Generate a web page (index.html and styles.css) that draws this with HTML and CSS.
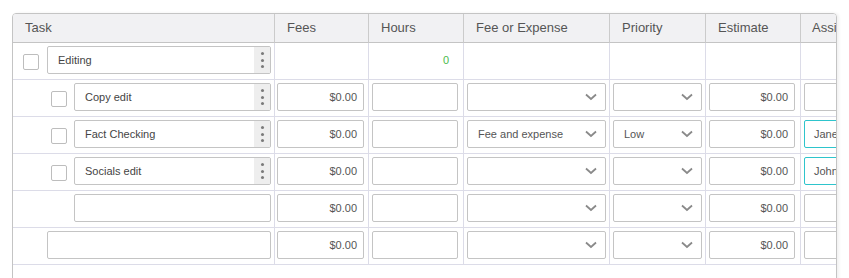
FILE: index.html
```html
<!DOCTYPE html>
<html>
<head>
<meta charset="utf-8">
<link rel="stylesheet" href="styles.css">
</head>
<body>
<div class="page">
  <div class="frame">
    <div class="grid">
      <div class="th">Task</div>
      <div class="th">Fees</div>
      <div class="th">Hours</div>
      <div class="th">Fee or Expense</div>
      <div class="th">Priority</div>
      <div class="th">Estimate</div>
      <div class="th th-last">Assignee</div>

      <!-- Row: Editing -->
      <div class="td task">
        <span class="check"></span>
        <div class="field taskfield"><span class="label">Editing</span><span class="kebab"><i></i><i></i><i></i></span></div>
      </div>
      <div class="td"></div>
      <div class="td total"><span>0</span></div>
      <div class="td"></div>
      <div class="td"></div>
      <div class="td"></div>
      <div class="td"></div>

      <!-- Row: Copy edit -->
      <div class="td task sub">
        <span class="check"></span>
        <div class="field taskfield"><span class="label">Copy edit</span><span class="kebab"><i></i><i></i><i></i></span></div>
      </div>
      <div class="td fees"><div class="field num">$0.00</div></div>
      <div class="td hours"><div class="field"></div></div>
      <div class="td feeexp"><div class="field select"><span class="val"></span><svg class="chev" width="12" height="8" viewBox="0 0 12 8"><polyline points="1,1.5 6,6 11,1.5" fill="none" stroke="#8a8a8a" stroke-width="1.8"/></svg></div></div>
      <div class="td prio"><div class="field select"><span class="val"></span><svg class="chev" width="12" height="8" viewBox="0 0 12 8"><polyline points="1,1.5 6,6 11,1.5" fill="none" stroke="#8a8a8a" stroke-width="1.8"/></svg></div></div>
      <div class="td est"><div class="field num">$0.00</div></div>
      <div class="td assi"><div class="field"></div></div>

      <!-- Row: Fact Checking -->
      <div class="td task sub">
        <span class="check"></span>
        <div class="field taskfield"><span class="label">Fact Checking</span><span class="kebab"><i></i><i></i><i></i></span></div>
      </div>
      <div class="td fees"><div class="field num">$0.00</div></div>
      <div class="td hours"><div class="field"></div></div>
      <div class="td feeexp"><div class="field select"><span class="val">Fee and expense</span><svg class="chev" width="12" height="8" viewBox="0 0 12 8"><polyline points="1,1.5 6,6 11,1.5" fill="none" stroke="#8a8a8a" stroke-width="1.8"/></svg></div></div>
      <div class="td prio"><div class="field select"><span class="val">Low</span><svg class="chev" width="12" height="8" viewBox="0 0 12 8"><polyline points="1,1.5 6,6 11,1.5" fill="none" stroke="#8a8a8a" stroke-width="1.8"/></svg></div></div>
      <div class="td est"><div class="field num">$0.00</div></div>
      <div class="td assi"><div class="field person">Jane Doe</div></div>

      <!-- Row: Socials edit -->
      <div class="td task sub">
        <span class="check"></span>
        <div class="field taskfield"><span class="label">Socials edit</span><span class="kebab"><i></i><i></i><i></i></span></div>
      </div>
      <div class="td fees"><div class="field num">$0.00</div></div>
      <div class="td hours"><div class="field"></div></div>
      <div class="td feeexp"><div class="field select"><span class="val"></span><svg class="chev" width="12" height="8" viewBox="0 0 12 8"><polyline points="1,1.5 6,6 11,1.5" fill="none" stroke="#8a8a8a" stroke-width="1.8"/></svg></div></div>
      <div class="td prio"><div class="field select"><span class="val"></span><svg class="chev" width="12" height="8" viewBox="0 0 12 8"><polyline points="1,1.5 6,6 11,1.5" fill="none" stroke="#8a8a8a" stroke-width="1.8"/></svg></div></div>
      <div class="td est"><div class="field num">$0.00</div></div>
      <div class="td assi"><div class="field person">John Smith</div></div>

      <!-- Row: new subtask -->
      <div class="td task sub">
        <span class="check hidden"></span>
        <div class="field"></div>
      </div>
      <div class="td fees"><div class="field num">$0.00</div></div>
      <div class="td hours"><div class="field"></div></div>
      <div class="td feeexp"><div class="field select"><span class="val"></span><svg class="chev" width="12" height="8" viewBox="0 0 12 8"><polyline points="1,1.5 6,6 11,1.5" fill="none" stroke="#8a8a8a" stroke-width="1.8"/></svg></div></div>
      <div class="td prio"><div class="field select"><span class="val"></span><svg class="chev" width="12" height="8" viewBox="0 0 12 8"><polyline points="1,1.5 6,6 11,1.5" fill="none" stroke="#8a8a8a" stroke-width="1.8"/></svg></div></div>
      <div class="td est"><div class="field num">$0.00</div></div>
      <div class="td assi"><div class="field"></div></div>

      <!-- Row: new task -->
      <div class="td task">
        <span class="check hidden"></span>
        <div class="field"></div>
      </div>
      <div class="td fees"><div class="field num">$0.00</div></div>
      <div class="td hours"><div class="field"></div></div>
      <div class="td feeexp"><div class="field select"><span class="val"></span><svg class="chev" width="12" height="8" viewBox="0 0 12 8"><polyline points="1,1.5 6,6 11,1.5" fill="none" stroke="#8a8a8a" stroke-width="1.8"/></svg></div></div>
      <div class="td prio"><div class="field select"><span class="val"></span><svg class="chev" width="12" height="8" viewBox="0 0 12 8"><polyline points="1,1.5 6,6 11,1.5" fill="none" stroke="#8a8a8a" stroke-width="1.8"/></svg></div></div>
      <div class="td est"><div class="field num">$0.00</div></div>
      <div class="td assi"><div class="field"></div></div>
    </div>
  </div>
</div>
</body>
</html>
```

FILE: styles.css
```css
html, body {
  margin: 0;
  padding: 0;
  background: #ffffff;
  font-family: "Liberation Sans", Arial, sans-serif;
}

.page {
  padding: 13px 0 0 12px;
}

.frame {
  width: 823px;
  height: 320px;
  border: 1px solid #c4c4c4;
  border-radius: 4px 4px 0 0;
  overflow: hidden;
  box-shadow: 2px 0 3px rgba(0, 0, 0, 0.06);
}

.grid {
  display: grid;
  grid-template-columns: 262px 94px 95px 146px 96px 95px 130px;
  width: max-content;
}

.th {
  box-sizing: border-box;
  height: 29px;
  line-height: 28px;
  padding-left: 12px;
  background: #f1f1f3;
  border-right: 1px solid #cbcbcb;
  border-bottom: 1px solid #c4c4c4;
  font-size: 13px;
  color: #555555;
  white-space: nowrap;
}

.th-last {
  padding-left: 11px;
}

.td {
  box-sizing: border-box;
  height: 37px;
  padding: 3px 0 0 3px;
  border-right: 1px solid #dcdce8;
  border-bottom: 1px solid #dcdce8;
}

.task {
  display: flex;
  align-items: flex-start;
  padding-left: 10px;
  padding-right: 3px;
}

.task.sub {
  padding-left: 38px;
}

.check {
  flex: none;
  box-sizing: border-box;
  width: 16px;
  height: 16px;
  margin-top: 8px;
  margin-right: 8px;
  border: 1px solid #bdbdbd;
  border-radius: 2px;
  background: #fff;
}

.task.sub .check {
  margin-right: 7px;
}

.check.hidden {
  visibility: hidden;
}

.field {
  box-sizing: border-box;
  height: 28px;
  border: 1px solid #c4c4c4;
  border-radius: 2px;
  background: #fff;
  display: flex;
  align-items: center;
  padding: 0 10px;
  font-size: 11px;
  color: #444444;
  white-space: nowrap;
  overflow: hidden;
}

.task .field {
  flex: 1;
}

.taskfield {
  padding-right: 0;
}

.taskfield .label {
  flex: 1;
}

.kebab {
  flex: none;
  width: 16px;
  align-self: stretch;
  background: #eeeeee;
  display: flex;
  flex-direction: column;
  align-items: center;
  justify-content: center;
  gap: 3.5px;
}

.kebab i {
  display: block;
  width: 3px;
  height: 3px;
  border-radius: 50%;
  background: #7a7a7a;
}

.fees {
  padding-left: 2px;
}

.fees .field { width: 87px; }
.hours .field { width: 86px; }
.feeexp .field { width: 139px; }
.prio .field { width: 89px; }
.est .field { width: 86px; }
.assi .field { width: 120px; }

.num {
  justify-content: flex-end;
  padding-right: 6px;
  color: #555555;
}

.select {
  padding-right: 8px;
}

.select .val {
  flex: 1;
  color: #555555;
}

.chev {
  flex: none;
  display: block;
}

.total {
  display: flex;
  justify-content: flex-end;
  align-items: center;
  height: 37px;
  padding: 3px 14px 6px 0;
  font-size: 11px;
  color: #4cbb4c;
}

.person {
  border-color: #2ec4cc;
  padding-left: 9px;
  color: #555555;
}
```
